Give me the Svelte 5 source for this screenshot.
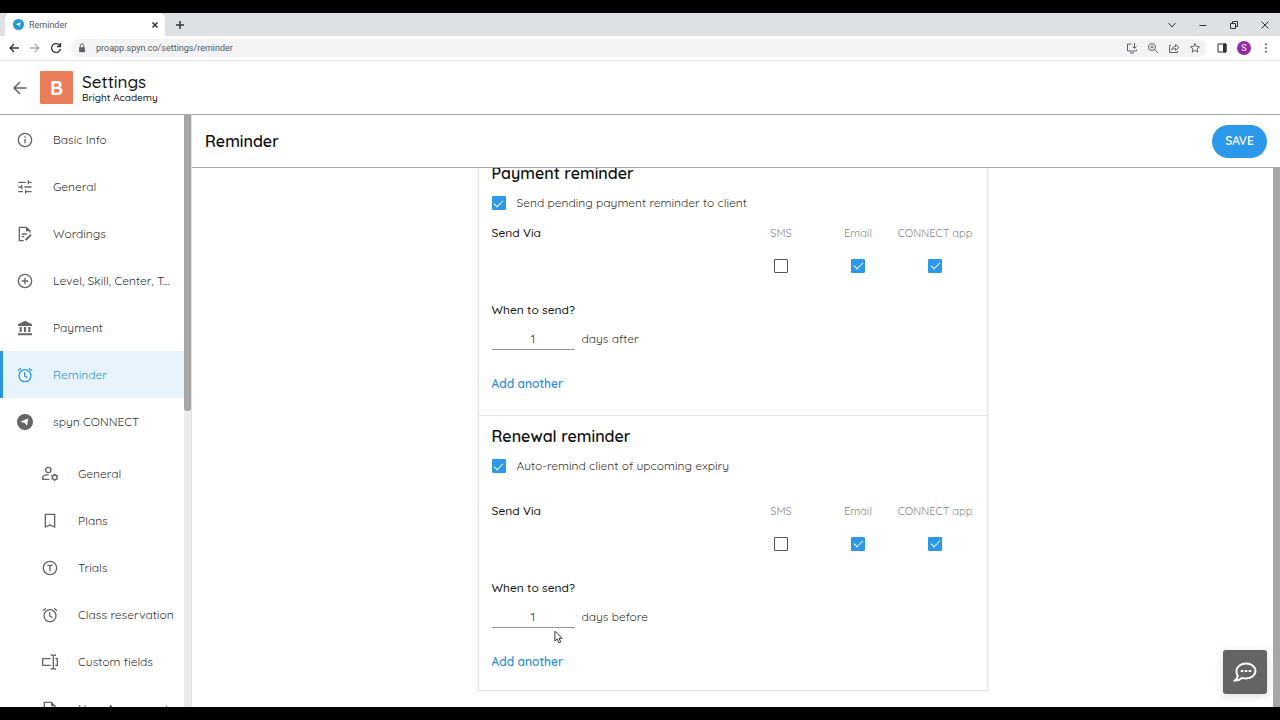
<script lang="ts">
  type NavItem = {
    label: string;
    icon: string;
    active?: boolean;
  };
  type Channel = {
    name: string;
    enabled: boolean;
  };
  type Reminder = {
    id: string;
    title: string;
    description: string;
    enabled: boolean;
    channels: Channel[];
    days: string;
    unit: string;
    roomy: boolean;
  };

  const navItems: NavItem[] = [
    { label: "Basic Info", icon: "info" },
    { label: "General", icon: "tune" },
    { label: "Wordings", icon: "edit" },
    { label: "Level, Skill, Center, T...", icon: "plus" },
    { label: "Payment", icon: "bank" },
    { label: "Reminder", icon: "alarm", active: true },
    { label: "spyn CONNECT", icon: "connect" },
  ];

  const connectItems: NavItem[] = [
    { label: "General", icon: "user" },
    { label: "Plans", icon: "bookmark" },
    { label: "Trials", icon: "trial" },
    { label: "Class reservation", icon: "alarm" },
    { label: "Custom fields", icon: "field" },
    { label: "User Agreement", icon: "edit" },
  ];

  let reminders: Reminder[] = $state([
    {
      id: "payment",
      title: "Payment reminder",
      description: "Send pending payment reminder to client",
      enabled: true,
      channels: [
        { name: "SMS", enabled: false },
        { name: "Email", enabled: true },
        { name: "CONNECT app", enabled: true },
      ],
      days: "1",
      unit: "days after",
      roomy: false,
    },
    {
      id: "renewal",
      title: "Renewal reminder",
      description: "Auto-remind client of upcoming expiry",
      enabled: true,
      channels: [
        { name: "SMS", enabled: false },
        { name: "Email", enabled: true },
        { name: "CONNECT app", enabled: true },
      ],
      days: "1",
      unit: "days before",
      roomy: true,
    },
  ]);

  let url = $state("proapp.spyn.co/settings/reminder");
</script>

{#snippet icon(name: string)}
  <svg class="icon" viewBox="0 0 24 24" aria-hidden="true">
    {#if name === "info"}
      <circle cx="12" cy="12" r="10" />
      <path d="M12 10.5V17M12 6.5v2" />
    {:else if name === "tune"}
      <path d="M2 5h11M17 5h5M17 2v6M2 12h5M11 12h11M7 9v6M2 19h7M13 19h9M13 16v6" />
    {:else if name === "edit"}
      <path d="M10 22H3.500V2H14l5.500 5.500V10M7 12h8M7 16h4" />
      <path class="solid" d="M13.500 2v6h6z" />
      <path stroke-width="3" d="M13 21l8-8" />
    {:else if name === "plus"}
      <circle cx="12" cy="12" r="10" />
      <path d="M12 7v10M7 12h10" />
    {:else if name === "bank"}
      <path class="solid" d="M12 1L1.500 6.500V9h21V6.500zM1.500 20h21v3h-21z" />
      <path stroke-width="3" d="M5.500 10.500v7.500M12 10.500v7.500M18.500 10.500v7.500" />
    {:else if name === "alarm"}
      <circle cx="12" cy="13" r="9" />
      <path d="M11.500 8v5.500l4 2.500M1.500 5.500L6 2M22.500 5.500L18 2" />
    {:else if name === "connect"}
      <circle class="solid" cx="12" cy="12" r="12" />
      <path class="hole" d="M5 11.500L17 6.500l-2 11-3.500-4z" />
    {:else if name === "user"}
      <circle cx="9.500" cy="6" r="4" />
      <path d="M11 20H1v-2.500c0-3 4-4.500 9-4.500" />
      <circle cx="19" cy="17" r="3.500" />
      <path d="M19 11.500v2M19 20.500v2M14.200 14.200l1.800 1M22 18.800l1.800 1M14.200 19.800l1.800-1M22 15.200l1.800-1" />
    {:else if name === "bookmark"}
      <path d="M5 2h14v19l-7-3-7 3z" />
    {:else if name === "trial"}
      <circle cx="12" cy="12" r="10" />
      <path d="M8 8h8M12 8v9" />
    {:else if name === "field"}
      <path d="M13 7H1v10h12M20 7h3v10h-3M17 2v20M13 1.500h2l2 1.500 2-1.500h2M13 22.500h2l2-1.500 2 1.500h2" />
    {/if}
  </svg>
{/snippet}

{#snippet navLink(item: NavItem)}
  <li>
    <a class="nav-link" class:active={item.active} href="#{item.icon}">
      {@render icon(item.icon)}
      <span>{item.label}</span>
    </a>
  </li>
{/snippet}

<div class="screen">
  <div class="tab-strip">
    <div class="tab">
      <svg class="favicon" viewBox="0 0 24 24" aria-hidden="true">
        <circle cx="12" cy="12" r="12" fill="#2199d6" />
        <path d="M6 11.500L17 7l-2.500 10-3.500-4z" fill="#fff" />
      </svg>
      <span class="tab-title">Reminder</span>
      <button class="chrome-button" aria-label="Close tab">
        <svg viewBox="0 0 12 12"><path stroke-width="1.500" d="M3.500 3.500l5 5M8.500 3.500l-5 5" /></svg>
      </button>
    </div>
    <button class="chrome-button new-tab" aria-label="New tab">
      <svg viewBox="0 0 12 12"><path stroke-width="1.500" d="M6 2v8M2 6h8" /></svg>
    </button>
    <div class="window-buttons">
      <button class="chrome-button" aria-label="Search tabs">
        <svg viewBox="0 0 12 12"><path d="M2.500 4L6 8l3.500-4" /></svg>
      </button>
      <button class="chrome-button" aria-label="Minimize">
        <svg viewBox="0 0 12 12"><path d="M2.500 6.500h7" /></svg>
      </button>
      <button class="chrome-button" aria-label="Restore">
        <svg viewBox="0 0 12 12"><path d="M2.500 4.500h5v5h-5zM4.500 4V2.500h5v5H8" /></svg>
      </button>
      <button class="chrome-button" aria-label="Close window">
        <svg viewBox="0 0 12 12"><path d="M2.500 2.500l7 7M9.500 2.500l-7 7" /></svg>
      </button>
    </div>
  </div>

  <div class="toolbar">
    <button class="chrome-button" aria-label="Back">
      <svg viewBox="0 0 12 12"><path stroke-width="1.300" d="M11 6H2M6 2L2 6l4 4" /></svg>
    </button>
    <button class="chrome-button faded" aria-label="Forward">
      <svg viewBox="0 0 12 12"><path stroke-width="1.300" d="M1 6h9M6 2l4 4-4 4" /></svg>
    </button>
    <button class="chrome-button" aria-label="Reload">
      <svg viewBox="0 0 12 12"><path stroke-width="1.300" d="M10.500 7A4.500 4.500 0 1 1 9 2.600L10.500 4M10.500 1v3.500H7" /></svg>
    </button>
    <div class="address">
      <svg class="lock" viewBox="0 0 12 12" aria-hidden="true">
        <path d="M2.500 5h7v6h-7z" fill="#5f6368" stroke="none" />
        <path d="M4 5V3a2 2 0 0 1 4 0v2" stroke-width="1.200" />
      </svg>
      <input aria-label="Address" bind:value={url} />
      <button class="chrome-button muted" aria-label="Install app">
        <svg viewBox="0 0 12 12"><path d="M5.500 2H1.500v7h9V7.500M4 11h4M8.500 1v5M6.500 4.500l2 2 2-2" /></svg>
      </button>
      <button class="chrome-button muted" aria-label="Zoom">
        <svg viewBox="0 0 12 12"><circle cx="5" cy="5" r="3.500" /><path d="M7.500 7.500L11 11M5 3.500v3M3.500 5h3" /></svg>
      </button>
      <button class="chrome-button muted" aria-label="Share">
        <svg viewBox="0 0 12 12"><path d="M3 3.500H1.500v7h8V9M3.500 8C4 5.500 5.500 4.500 7.500 4.500V2.500L11 5.500l-3.500 3v-2C6 6.500 4.500 7 3.500 8z" /></svg>
      </button>
      <button class="chrome-button muted" aria-label="Bookmark">
        <svg viewBox="0 0 12 12"><path d="M6 1.500l1.300 3 3.200.3-2.400 2.100.7 3.200L6 8.400l-2.800 1.700.7-3.200L1.500 4.800l3.200-.3z" /></svg>
      </button>
    </div>
    <button class="chrome-button" aria-label="Side panel">
      <svg viewBox="0 0 12 12"><path d="M2 2h8v8H2z" /><path d="M7.500 2H10v8H7.500z" fill="currentColor" /></svg>
    </button>
    <button class="profile" aria-label="Profile">S</button>
    <button class="chrome-button" aria-label="Menu">
      <svg viewBox="0 0 12 12"><path d="M6 1.500V3M6 5.200v1.500M6 9v1.500" stroke-width="1.500" /></svg>
    </button>
  </div>

  <header class="app-header">
    <button class="back" aria-label="Back to dashboard">
      <svg viewBox="0 0 16 16"><path stroke-width="1.500" d="M14.500 8H2M8 2L2 8l6 6" /></svg>
    </button>
    <div class="logo">B</div>
    <div>
      <div class="app-title">Settings</div>
      <div class="app-subtitle">Bright Academy</div>
    </div>
  </header>

  <div class="workspace">
    <aside class="sidebar">
      <nav>
        <ul>
          {#each navItems as item}
            {@render navLink(item)}
          {/each}
        </ul>
        <ul class="nested">
          {#each connectItems as item}
            {@render navLink(item)}
          {/each}
        </ul>
      </nav>
      <div class="scroll-track"><div class="scroll-thumb"></div></div>
    </aside>

    <main>
      <div class="page-header">
        <h1>Reminder</h1>
        <button class="save">SAVE</button>
      </div>

      <div class="page-body">
        <div class="scroll-content">
          <div class="card">
            {#each reminders as reminder}
              <section class:roomy={reminder.roomy}>
                <h2>{reminder.title}</h2>
                <div class="toggle">
                  <input type="checkbox" id={`${reminder.id}-enabled`} bind:checked={reminder.enabled} />
                  <label for={`${reminder.id}-enabled`}>{reminder.description}</label>
                </div>

                <table>
                  <thead>
                    <tr>
                      <th class="via">Send Via</th>
                      {#each reminder.channels as channel}
                        <th>{channel.name}</th>
                      {/each}
                    </tr>
                  </thead>
                  <tbody>
                    <tr>
                      <td></td>
                      {#each reminder.channels as channel}
                        <td>
                          <input type="checkbox" aria-label={channel.name} bind:checked={channel.enabled} />
                        </td>
                      {/each}
                    </tr>
                  </tbody>
                </table>

                <h3>When to send?</h3>
                <div class="delay">
                  <input type="text" id={`${reminder.id}-days`} bind:value={reminder.days} />
                  <label for={`${reminder.id}-days`}>{reminder.unit}</label>
                </div>
                <button class="add">Add another</button>
              </section>
            {/each}
          </div>
        </div>
        <div class="scroll-track"><div class="scroll-thumb full"></div></div>
      </div>
    </main>
  </div>

  <button class="chat" aria-label="Open chat">
    <svg viewBox="0 0 24 24">
      <path d="M13 3.500c5.500 0 9.500 3.300 9.500 7.500s-4 7.500-9.500 7.500c-1.500 0-2.800-.2-4-.6-1.800 1.700-4 2.600-7 2.600 1.500-1.500 2.500-3 2.800-4.700A7 7 0 0 1 3.500 11c0-4.200 4-7.500 9.500-7.500z" />
      <path d="M7.700 11h2.600M11.700 11h2.600M15.700 11h2.600" />
    </svg>
  </button>

  <svg class="pointer" viewBox="0 0 10 16" aria-hidden="true">
    <path d="M1 1v11l2.500-2.300L5.500 14l2-1-2-4H9z" fill="#fff" stroke="#222" />
  </svg>
</div>

<style>
  :global(body) {
    margin: 0;
    background: #000;
  }

  .screen {
    position: relative;
    display: flex;
    flex-direction: column;
    box-sizing: border-box;
    height: 100vh;
    padding: 13px 0;
    overflow: hidden;
    background: #000;
    color: #222;
    font-family: Quicksand, Lato, sans-serif;
    font-size: 12px;
    line-height: 16px;
  }

  button {
    border: 0;
    padding: 0;
    background: none;
    color: inherit;
    font: inherit;
    cursor: pointer;
  }

  ul {
    margin: 0;
    padding: 0;
    list-style: none;
  }

  svg {
    fill: none;
    stroke: currentColor;
  }

  /* browser chrome */

  .tab-strip {
    display: flex;
    flex: none;
    align-items: center;
    height: 23px;
    padding: 0 9px 0 5px;
    background: #dee1e4;
    font-family: Roboto, sans-serif;
  }

  .tab {
    display: flex;
    align-items: center;
    gap: 5px;
    box-sizing: border-box;
    width: 160px;
    height: 23px;
    padding: 0 4px 0 8px;
    border-radius: 6px 6px 0 0;
    background: #fff;
  }

  .favicon {
    width: 11px;
    height: 11px;
    stroke: none;
  }

  .tab-title {
    flex: 1;
    color: #55595d;
    font-size: 9px;
  }

  .chrome-button {
    display: flex;
    color: #333;
  }

  .chrome-button svg {
    width: 12px;
    height: 12px;
  }

  .chrome-button.faded {
    color: #aaa;
  }

  .chrome-button.muted {
    color: #5f6368;
  }

  .new-tab {
    margin-left: 9px;
  }

  .window-buttons {
    display: flex;
    gap: 19px;
    margin-left: auto;
  }

  .toolbar {
    display: flex;
    flex: none;
    align-items: center;
    gap: 9px;
    height: 24px;
    padding: 0 8px;
    border-bottom: 1px solid #e4e6e8;
    background: #fff;
    font-family: Roboto, sans-serif;
  }

  .address {
    display: flex;
    flex: 1;
    align-items: center;
    gap: 9px;
    height: 18px;
    padding: 0 6px;
    border-radius: 9px;
    background: #f1f3f4;
  }

  .lock {
    width: 10px;
    height: 10px;
    color: #5f6368;
  }

  .address input {
    flex: 1;
    min-width: 0;
    border: 0;
    padding: 0;
    outline: 0;
    background: none;
    color: #55595d;
    font: 9px Roboto, sans-serif;
  }

  .profile {
    width: 14px;
    height: 14px;
    border-radius: 50%;
    background: #9429a8;
    color: #fff;
    font-size: 9px;
    line-height: 14px;
  }

  /* application */

  .app-header {
    display: flex;
    flex: none;
    align-items: center;
    height: 53px;
    padding: 0 12px;
    border-bottom: 1px solid #aaa;
    background: #fff;
    color: #111;
    font-weight: 500;
  }

  .back {
    display: flex;
    margin-right: 12px;
    color: #666;
  }

  .back svg {
    width: 16px;
    height: 16px;
  }

  .logo {
    width: 33px;
    height: 33px;
    margin-right: 9px;
    border-radius: 1px;
    background: #ea7d5a;
    color: #fff;
    font-size: 20px;
    font-weight: 700;
    line-height: 33px;
    text-align: center;
  }

  .app-title {
    font-size: 17px;
    line-height: 20px;
  }

  .app-subtitle {
    font-size: 10px;
    line-height: 12px;
  }

  .workspace {
    display: flex;
    flex: 1;
    min-height: 0;
    background: #fff;
  }

  .sidebar {
    display: flex;
    width: 192px;
    overflow: hidden;
  }

  nav {
    flex: 1;
    min-width: 0;
    padding-top: 1px;
  }

  .nav-link {
    display: flex;
    align-items: center;
    gap: 20px;
    box-sizing: border-box;
    height: 47px;
    padding: 0 12px 0 14px;
    border-left: 3px solid transparent;
    color: #333;
    text-decoration: none;
  }

  .nav-link.active {
    border-color: #2b95e0;
    background: #e8f4fb;
    color: #2b95d8;
  }

  .nav-link span {
    white-space: nowrap;
  }

  .nested {
    margin-top: 5px;
  }

  .nested .nav-link {
    padding: 0 8px 0 39px;
  }

  .icon {
    flex: none;
    width: 16px;
    height: 16px;
    stroke-width: 2;
    color: #666;
  }

  .active .icon {
    color: inherit;
  }

  .icon .solid {
    fill: currentColor;
    stroke: none;
  }

  .icon .hole {
    fill: #fff;
    stroke: none;
  }

  .scroll-track {
    flex: none;
    width: 7px;
    background: #ececec;
  }

  .sidebar .scroll-track {
    border-right: 1px solid #e0e0e0;
  }

  .scroll-thumb {
    height: 50%;
    border-radius: 0 0 3px 3px;
    background: #a6a6a6;
  }

  .scroll-thumb.full {
    height: 100%;
    border-radius: 0;
  }

  main {
    display: flex;
    flex: 1;
    flex-direction: column;
    min-width: 0;
  }

  .page-header {
    display: flex;
    flex: none;
    align-items: center;
    justify-content: space-between;
    height: 52px;
    padding: 0 13px;
    border-bottom: 1px solid #aaa;
  }

  h1,
  h2 {
    margin: 0;
    color: #111;
    font-size: 16px;
    font-weight: 600;
    line-height: 24px;
  }

  .save {
    width: 55px;
    height: 33px;
    border-radius: 17px;
    background: #2b98ea;
    color: #fff;
    font-weight: 600;
  }

  .page-body {
    display: flex;
    flex: 1;
    min-height: 0;
    overflow: hidden;
  }

  /* the form is scrolled past the top edge of the first section */
  .scroll-content {
    flex: 1;
    margin-top: -15px;
  }

  .card {
    box-sizing: border-box;
    max-width: 510px;
    margin: 0 auto;
    border: 1px solid #e4e4e4;
    box-shadow: 0 0 2px #e4e4e4;
  }

  section {
    padding: 7px 13px 23px;
  }

  section.roomy {
    padding: 8px 13px 20px;
    border-top: 1px solid #e8e8e8;
  }

  .toggle {
    display: flex;
    align-items: center;
    gap: 11px;
    height: 24px;
    margin: 6px 0 10px;
  }

  .roomy .toggle {
    margin-bottom: 25px;
  }

  input[type="checkbox"] {
    display: inline-grid;
    place-content: center;
    box-sizing: border-box;
    width: 14px;
    height: 14px;
    margin: 0;
    border: 1px solid #555;
    border-radius: 1px;
    appearance: none;
    vertical-align: middle;
  }

  input[type="checkbox"]:checked {
    border-color: #2b98ea;
    background: #2b98ea;
  }

  input[type="checkbox"]:checked::after {
    content: "";
    width: 8px;
    height: 4px;
    margin-bottom: 2px;
    border: solid #fff;
    border-width: 0 0 1px 1px;
    transform: rotate(-45deg);
  }

  table {
    width: 100%;
    table-layout: fixed;
    border-collapse: collapse;
  }

  th {
    width: 77px;
    padding: 0;
    color: #888;
    font-size: 11px;
    font-weight: 400;
    white-space: nowrap;
  }

  .via {
    width: auto;
    color: #111;
    font-size: 12px;
    font-weight: 500;
    text-align: left;
  }

  td {
    height: 48px;
    padding: 0;
    text-align: center;
  }

  h3 {
    margin: 13px 0 10px;
    color: #111;
    font-size: 12px;
    font-weight: 500;
    line-height: 16px;
  }

  .delay {
    display: flex;
    align-items: center;
    gap: 7px;
    margin-bottom: 26px;
  }

  .delay input {
    box-sizing: border-box;
    width: 83px;
    height: 22px;
    border: 0;
    border-bottom: 1px solid #999;
    border-radius: 0;
    padding: 0;
    outline: 0;
    background: none;
    color: #333;
    font: inherit;
    text-align: center;
  }

  .toggle label,
  .delay label {
    color: #333;
  }

  .add {
    display: block;
    color: #2b8fd8;
    font-weight: 600;
  }

  .chat {
    position: absolute;
    right: 13px;
    bottom: 26px;
    display: grid;
    place-content: center;
    width: 44px;
    height: 44px;
    border-radius: 3px;
    background: #646464;
    box-shadow: 0 2px 10px #ddd;
    color: #fff;
  }

  .chat svg {
    width: 24px;
    height: 24px;
    stroke-width: 2;
  }

  .pointer {
    position: absolute;
    top: 630px;
    left: 554px;
    width: 9px;
    height: 15px;
  }
</style>
